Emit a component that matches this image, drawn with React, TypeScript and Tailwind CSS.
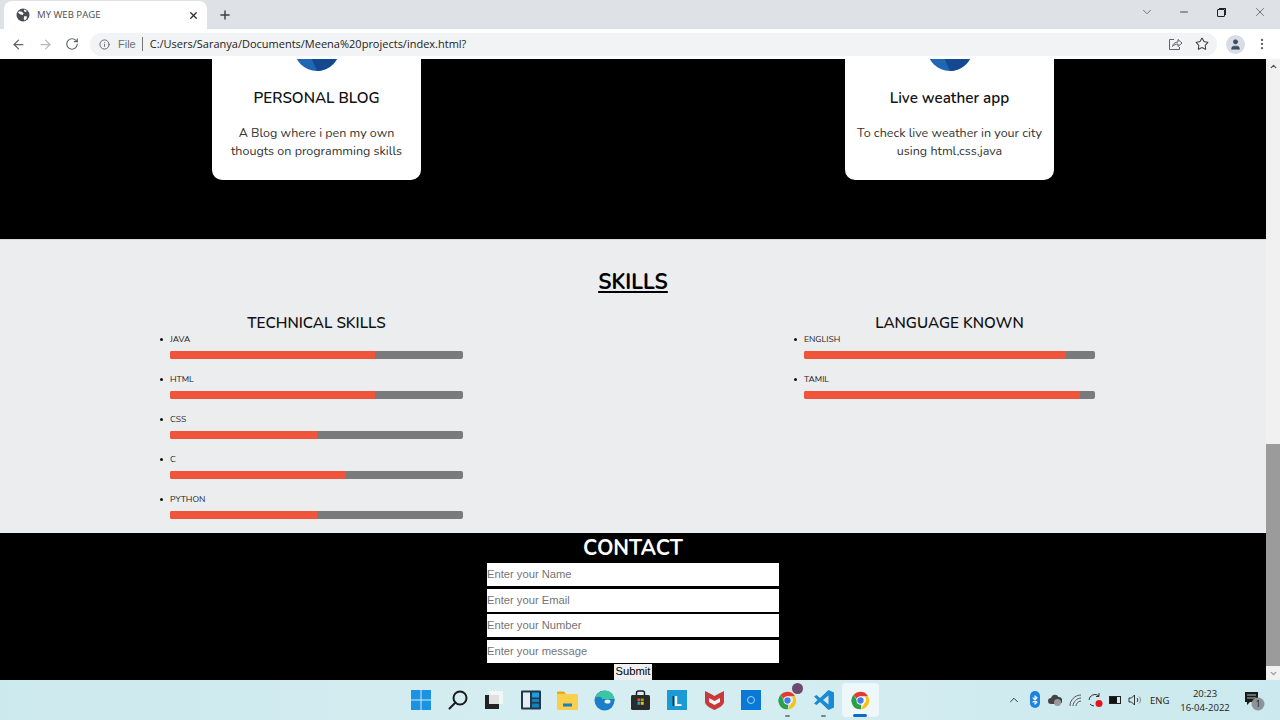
import { ArrowLeft, ArrowRight, RotateCw, Info, Star, MoreVertical, ChevronDown, ChevronUp, Minus, X, Plus, User, Bluetooth } from "lucide-react";

const nunito = "font-['Nunito','Lato','Noto_Sans',sans-serif]";

function Globe() {
  return (
    <svg width="14" height="14" viewBox="0 0 14 14">
      <circle cx="7" cy="7" r="6.5" fill="#4a4d51" />
      <path d="M3 3.2l3 .6 1.6 1.6-1 1.6-2-.4-2.6-1.8zM8.5 8l2.6.4-.6 2.6-2 1.4-.8-2.2zM8 1.5l3 1.2-1.4 1.2-1.6-.6z" fill="#fff" />
    </svg>
  );
}

function Chrome({ size = 24 }: { size?: number }) {
  return (
    <svg width={size} height={size} viewBox="0 0 24 24">
      <path d="M12 1a11 11 0 0 1 9.5 5.5H12a5.5 5.5 0 0 0-5 3.2L3.4 4.6A11 11 0 0 1 12 1z" fill="#e33b2e" />
      <path d="M21.5 6.500A11 11 0 0 1 12.500 23l4.300-7.500a5.500 5.500 0 0 0 0-9z" fill="#fbc116" />
      <path d="M3.400 4.600L7.700 12a5.500 5.500 0 0 0 5.300 5l-.5 6A11 11 0 0 1 3.400 4.600z" fill="#2e9e48" />
      <circle cx="12" cy="12" r="5" fill="#fff" />
      <circle cx="12" cy="12" r="4" fill="#3f7de8" />
    </svg>
  );
}

function TaskIcon({ children, dot, active }: { children: React.ReactNode; dot?: boolean; active?: boolean }) {
  return (
    <div className={`relative w-[36.6px] h-[34px] flex items-center justify-center rounded ${active ? "bg-[#eef8fa]" : ""}`}>
      {children}
      {dot && <div className="absolute bottom-0 w-[5px] h-[2px] rounded bg-[#7b8487]" />}
      {active && <div className="absolute bottom-0 w-[14px] h-[3px] rounded bg-[#0b6cc4]" />}
    </div>
  );
}

function SkillBar({ name, value }: { name: string; value: number }) {
  return (
    <li className="relative h-10 text-[8.6px] leading-[12px] text-[#222] uppercase before:content-[''] before:absolute before:-left-[10px] before:top-[5px] before:w-[3px] before:h-[3px] before:rounded-full before:bg-[#111]">
      {name}
      <div className="mt-[6px] h-2 rounded-[2px] bg-[#7a7a7a] overflow-hidden">
        <div className="h-full bg-[#f0543a]" style={{ width: `${value}%` }} />
      </div>
    </li>
  );
}

function ProjectCard({ title, lines }: { title: string; lines: string[] }) {
  return (
    <div className="w-[209px] h-[121px] mx-auto bg-white rounded-b-[10px] flex flex-col items-center">
      <div className="w-[46px] h-3 overflow-hidden relative">
        <svg width="46" height="12" viewBox="0 0 46 12">
          <circle cx="23" cy="-11" r="23" fill="#1f66b5" />
          <path d="M23 12a23 23 0 0 0 21-15L30 -11 16 -4z" fill="#14498f" />
        </svg>
      </div>
      <h3 className="mt-[16px] text-[15.2px] leading-[22px] font-semibold text-[#111]">{title}</h3>
      <p className="mt-[15px] text-[12.5px] leading-[17.5px] text-[#333] text-center">
        {lines[0]}
        <br />
        {lines[1]}
      </p>
    </div>
  );
}

const inputs = ["Enter your Name", "Enter your Email", "Enter your Number", "Enter your message"];

export default function App() {
  return (
    <div className="w-[1280px] h-[720px] overflow-hidden flex flex-col font-['Open_Sans',sans-serif]">
      {/* tab strip */}
      <div className="h-[29px] bg-[#dee1e6] flex items-end shrink-0">
        <div className="ml-[4px] w-[203px] h-[28px] bg-white rounded-t-lg flex items-center pl-[12px] pr-[8px]">
          <Globe />
          <span className="ml-[7px] text-[9.6px] text-[#4a4d51] flex-1">MY WEB PAGE</span>
          <X size={11} strokeWidth={3} className="text-[#333]" />
        </div>
        <Plus size={14} strokeWidth={2.5} className="ml-[11px] mb-[7px] text-[#3c4043]" />
        <div className="flex-1" />
        <ChevronDown size={14} strokeWidth={1.2} className="mb-[10px] text-[#444] mr-[24px]" />
        <Minus size={12} strokeWidth={1.6} className="mb-[11px] text-[#222] mr-[27px]" />
        <div className="relative mb-[12px] mr-[28px] w-[8px] h-[8px] border border-[#222] rounded-[1px]">
          <div className="absolute -top-[2px] -right-[2px] w-[7px] h-[7px] border-t border-r border-[#222]" />
        </div>
        <X size={14} strokeWidth={1.1} className="mb-[10px] text-[#333] mr-[13px]" />
      </div>

      {/* toolbar */}
      <div className="h-[30px] bg-white flex items-center shrink-0">
        <ArrowLeft size={15} strokeWidth={2} className="ml-[11px] text-[#5f6368]" />
        <ArrowRight size={15} strokeWidth={2} className="ml-[12px] text-[#b6b9bd]" />
        <RotateCw size={14} strokeWidth={2} className="ml-[12px] text-[#5f6368]" />
        <div className="ml-[11px] w-[1127px] h-[23px] rounded-full bg-[#f1f3f4] flex items-center pl-[9px] pr-[8px]">
          <Info size={11} strokeWidth={2} className="text-[#5f6368]" />
          <span className="ml-[8px] text-[11px] text-[#6b6f73] font-['Liberation_Sans',sans-serif]">File</span>
          <span className="ml-[6px] w-px h-[14px] bg-[#777]" />
          <span className="ml-[7px] text-[11px] text-[#222]">C:/Users/Saranya/Documents/Meena%20projects/index.html?</span>
          <div className="flex-1" />
          <svg width="15" height="14" viewBox="0 0 15 14" fill="none" stroke="#5f6368" strokeWidth="1">
            <path d="M6 2.500H1.500v10h10V10M4.500 9.500c.5-3 3-4.500 5.500-4.500V2.500L14 6l-4 3.500V7c-2 0-4 .8-5.500 2.500z" />
          </svg>
          <Star size={14} strokeWidth={1.8} className="ml-[12px] text-[#444]" />
        </div>
        <div className="ml-[9px] w-[19px] h-[19px] rounded-full bg-[#d8dde6] flex items-center justify-center">
          <User size={13} fill="#3c4b5e" strokeWidth={1} className="text-[#3c4b5e]" />
        </div>
        <MoreVertical size={14} strokeWidth={2} className="ml-[10px] text-[#5f6368]" />
      </div>

      {/* page with scrollbar */}
      <div className="h-[621px] flex shrink-0">
        <div className={`w-[1266px] flex flex-col ${nunito}`}>
          <section className="h-[180px] bg-black grid grid-cols-2">
            <ProjectCard title="PERSONAL BLOG" lines={["A Blog where i pen my own", "thougts on programming skills"]} />
            <ProjectCard title="Live weather app" lines={["To check live weather in your city", "using html,css,java"]} />
          </section>

          <section className="h-[294px] bg-[#ecedef] border-t border-[#d8d8d8] flex flex-col">
            <h2 className="mt-[27px] text-center text-[21px] leading-[30px] font-bold underline text-black">SKILLS</h2>
            <div className="mt-[15px] grid grid-cols-2">
              <div className="w-[293px] mx-auto">
                <h3 className="pt-[2px] text-center text-[15.2px] leading-[19px] font-semibold text-[#111] whitespace-nowrap">TECHNICAL SKILLS</h3>
                <ul>
                  <SkillBar name="Java" value={70} />
                  <SkillBar name="Html" value={70} />
                  <SkillBar name="Css" value={50} />
                  <SkillBar name="C" value={60} />
                  <SkillBar name="Python" value={50} />
                </ul>
              </div>
              <div className="w-[291px] mx-auto">
                <h3 className="pt-[2px] text-center text-[15.2px] leading-[19px] font-semibold text-[#111] whitespace-nowrap">LANGUAGE KNOWN</h3>
                <ul>
                  <SkillBar name="English" value={90} />
                  <SkillBar name="Tamil" value={95} />
                </ul>
              </div>
            </div>
          </section>

          <section className="h-[147px] bg-black flex flex-col items-center">
            <h2 className="mt-[2px] text-[21px] leading-[27px] font-bold text-white">CONTACT</h2>
            <form className="mt-[1px] flex flex-col items-center font-['Liberation_Sans',sans-serif]">
              {inputs.map((p) => (
                <input
                  key={p}
                  placeholder={p}
                  className="w-[292px] h-[23px] mb-[2.500px] bg-white pb-px text-[11.2px] outline-none placeholder:text-[#757575]"
                />
              ))}
              <button type="button" className="-mt-[1px] w-[38px] h-[16px] pb-[2px] bg-[#efefef] text-[11.2px] leading-[13px] text-black">
                Submit
              </button>
            </form>
          </section>
        </div>

        <div className="w-[14px] bg-[#f1f1f1] flex flex-col items-center">
          <ChevronUp size={9} strokeWidth={3.5} className="mt-[3px] text-[#555]" />
          <div className="mt-[373px] w-full h-[222px] bg-[#9b9b9b]" />
          <ChevronDown size={9} strokeWidth={3.5} className="mt-[3px] text-[#999]" />
        </div>
      </div>

      {/* taskbar */}
      <div className="h-[40px] bg-gradient-to-r from-[#cce9ee] via-[#d6eef1] to-[#cbe9ee] flex items-center relative shrink-0 font-['Open_Sans',sans-serif]">
        <div className="ml-[403px] flex items-center">
          <TaskIcon>
            <svg width="20" height="20" viewBox="0 0 20 20">
              <path d="M0 0h9.500v9.500H0zM10.500 0H20v9.500h-9.500zM0 10.500h9.500V20H0zM10.500 10.500H20V20h-9.500z" fill="#1b93e2" />
            </svg>
          </TaskIcon>
          <TaskIcon>
            <svg width="20" height="20" viewBox="0 0 20 20" fill="none" stroke="#1a1a1a" strokeWidth="2">
              <circle cx="12" cy="8" r="6.500" />
              <path d="M7.500 12.500L1.500 18.500" strokeLinecap="round" />
            </svg>
          </TaskIcon>
          <TaskIcon>
            <svg width="20" height="20" viewBox="0 0 20 20">
              <rect x="1" y="5" width="14" height="14" fill="#222" />
              <rect x="5" y="1" width="14" height="13" fill="#f4f6f6" opacity="0.9" />
            </svg>
          </TaskIcon>
          <TaskIcon>
            <svg width="20" height="20" viewBox="0 0 20 20">
              <rect width="20" height="19" rx="1" y="0.500" fill="#20374f" />
              <rect x="2" y="2.500" width="7" height="15" fill="#e6ecef" />
              <rect x="11" y="2.500" width="7" height="5" fill="#1aa0dc" />
              <rect x="11" y="9" width="7" height="3" fill="#1480b8" />
              <rect x="11" y="13.500" width="7" height="4" fill="#1480b8" />
            </svg>
          </TaskIcon>
          <TaskIcon>
            <svg width="21" height="19" viewBox="0 0 21 19">
              <path d="M0 1.500A1 1 0 0 1 1 .500h6l2 2.500H0z" fill="#e8a91f" />
              <rect y="3" width="21" height="16" rx="1" fill="#fbcf4e" />
              <rect x="6" y="12.500" width="9" height="3" fill="#1b7fc4" />
            </svg>
          </TaskIcon>
          <TaskIcon>
            <svg width="21" height="21" viewBox="0 0 21 21">
              <circle cx="10.500" cy="10.500" r="10" fill="#1a7fc8" />
              <path d="M1 8C3 2 9 .500 13 .700c4 .500 7 4 7.500 8.800H8.500C8 7 5 5.500 1 8z" fill="#3cc6a2" />
              <path d="M9 9h11.500c0 1.500-.5 3-1 4h-7c-1 2 2 4 6 3-2 3-5 4-7 4-3-2-4-8-2.500-11z" fill="#1a7fc8" />
              <ellipse cx="13.500" cy="11.500" rx="3" ry="2" fill="#e3f4f8" />
            </svg>
          </TaskIcon>
          <TaskIcon>
            <svg width="19" height="20" viewBox="0 0 19 20">
              <path d="M5.500 6V3a2 2 0 0 1 2-2h4a2 2 0 0 1 2 2v3" fill="none" stroke="#222" strokeWidth="1.500" />
              <rect y="5" width="19" height="15" rx="1.500" fill="#2a2a2a" />
              <rect x="6.500" y="8.500" width="2.800" height="2.800" fill="#f25022" />
              <rect x="9.900" y="8.500" width="2.800" height="2.800" fill="#7fba00" />
              <rect x="6.500" y="12" width="2.800" height="2.800" fill="#00a4ef" />
              <rect x="9.900" y="12" width="2.800" height="2.800" fill="#ffb900" />
            </svg>
          </TaskIcon>
          <TaskIcon>
            <div className="w-5 h-5 bg-[#1c9ad6] flex items-center justify-center text-white text-[15px] font-bold leading-none [text-shadow:-2px_0_#0d2e78]">L</div>
          </TaskIcon>
          <TaskIcon>
            <svg width="19" height="20" viewBox="0 0 19 20">
              <path d="M0 1l5 2.500L9.500 6 14 3.500 19 1v11c0 3-5 6-9.500 8C5 18 0 15 0 12z" fill="#c8393a" />
              <path d="M4 8l5.500 3L15 8v4l-5.500 3L4 12z" fill="#f5f5f5" />
            </svg>
          </TaskIcon>
          <TaskIcon>
            <div className="w-5 h-5 bg-[#0a78d4] flex items-center justify-center">
              <div className="w-2 h-2 rounded-full border border-[#9fdcf5]" />
            </div>
          </TaskIcon>
          <TaskIcon dot>
            <Chrome size={19} />
            <div className="absolute top-[0px] right-[3px] w-[11px] h-[11px] rounded-full bg-[#6b4a70]" />
          </TaskIcon>
          <TaskIcon dot>
            <svg width="20" height="20" viewBox="0 0 20 20">
              <path d="M14.500 0L20 2.500v15L14.500 20 6 12l-3.500 3L0 13.500 3.500 10 0 6.500 2.500 5 6 8z" fill="#1a8ad4" />
              <path d="M14.500 5.500L9 10l5.500 4.500z" fill="#cfe9ed" />
            </svg>
          </TaskIcon>
          <TaskIcon active>
            <Chrome size={19} />
          </TaskIcon>
        </div>

        {/* tray */}
        <ChevronUp size={14} strokeWidth={1.5} className="absolute left-[1007px] top-[13px] text-[#222]" />
        <div className="absolute left-[1030px] top-[11px] w-[10px] h-[17px] rounded-full bg-[#1a84e0] text-white flex items-center justify-center">
          <Bluetooth size={10} strokeWidth={2.5} />
        </div>
        <svg className="absolute left-[1048px] top-[13px]" width="14" height="14" viewBox="0 0 14 14">
          <path d="M3 11a3 3 0 0 1 0-6 4 4 0 0 1 7.500-1A3.500 3.500 0 0 1 11 11z" fill="#444" />
          <circle cx="9.500" cy="9.500" r="3.500" fill="#999" />
        </svg>
        <svg className="absolute left-[1069px] top-[13px]" width="13" height="14" viewBox="0 0 13 14" fill="none" stroke="#555">
          <path d="M1 13c0-6 5-11 11-11M4 13c0-4 4-8 8-8M7 13c0-2 2-5 5-5" />
        </svg>
        <svg className="absolute left-[1088px] top-[11px]" width="15" height="17" viewBox="0 0 15 17" fill="none" stroke="#333">
          <path d="M1 9a6 6 0 0 1 10-4M11 2v3.500H8M2 13a6 6 0 0 0 4 2" />
          <circle cx="11" cy="12.500" r="3.500" fill="#e8141c" stroke="none" />
        </svg>
        <div className="absolute left-[1109px] top-[16px] w-[12px] h-[8px] border border-[#222] flex">
          <div className="w-[7px] bg-[#111]" />
        </div>
        <svg className="absolute left-[1128px] top-[13px]" width="14" height="14" viewBox="0 0 14 14" fill="none" stroke="#333">
          <path d="M1 5h2.500L6.500 2v10L3.500 9H1zM9 5c1 1 1 3 0 4" />
          <path d="M11 3.500c2 2 2 5 0 7" stroke="#888" />
        </svg>
        <span className="absolute left-[1150px] top-[14px] text-[9.500px] leading-[14px] text-[#222]">ENG</span>
        <div className="absolute left-[1175px] top-[7px] w-[60px] text-center text-[9.500px] leading-[14px] text-[#222]">
          20:23
          <br />
          16-04-2022
        </div>
        <svg className="absolute left-[1245px] top-[12px]" width="22" height="20" viewBox="0 0 22 20">
          <path d="M0 0h13v10H5l-3 3v-3H0z" fill="#1a1a1a" />
          <path d="M2 3h9M2 6h9" stroke="#cfe9ed" strokeWidth="0.8" />
          <circle cx="13" cy="12" r="6.500" fill="#8d9496" />
          <text x="13" y="15" textAnchor="middle" fontSize="9" fill="#111">1</text>
        </svg>
      </div>
    </div>
  );
}
